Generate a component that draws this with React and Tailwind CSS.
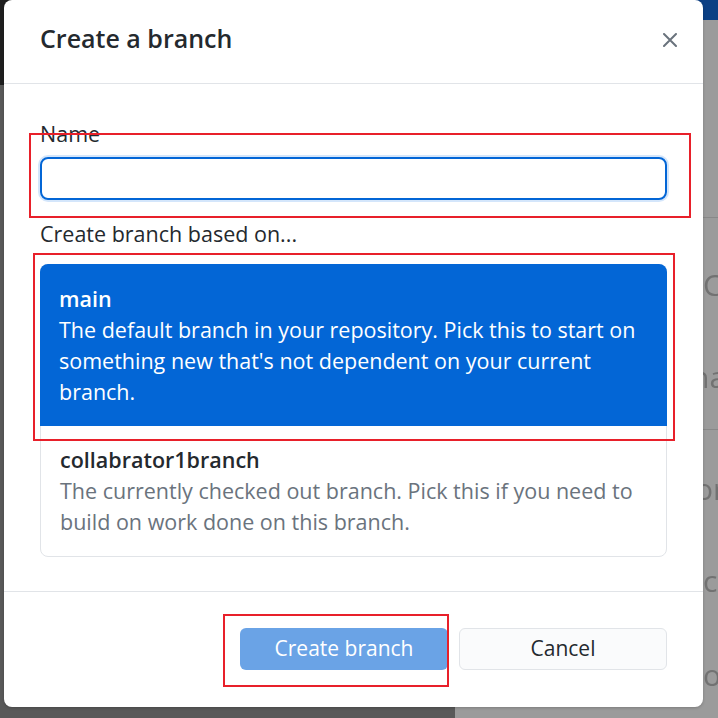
import React, { useState } from 'react';

const font = { fontFamily: '"Open Sans", "Noto Sans", Arial, sans-serif' };

const branches = [
  {
    name: 'main',
    description:
      "The default branch in your repository. Pick this to start on something new that's not dependent on your current branch.",
  },
  {
    name: 'collabrator1branch',
    description: 'The currently checked out branch. Pick this if you need to build on work done on this branch.',
  },
];

const App = () => {
  const [name, setName] = useState('');
  const [selected, setSelected] = useState('main');

  return (
    <div className="relative w-[718px] h-[718px] overflow-hidden bg-[#5a5a5a] flex" style={font}>
      {/* dimmed app behind the dialog */}
      <div className="w-[455px] flex flex-col">
        <div className="h-[85px] bg-[#1f1f1f]"></div>
        <div className="flex-1 bg-[#595959]"></div>
      </div>
      <div className="flex-1 flex flex-col bg-[#9b9b9b] text-[#727272] text-[30px] leading-none whitespace-nowrap overflow-hidden">
        <div className="h-[20px] bg-[#0b3f84]"></div>
        <div className="h-[198px] border-b border-[#888888]"></div>
        <div className="h-[212px] border-b border-[#888888] pl-[248px] pt-[52px] flex flex-col gap-[62px] blur-[0.6px]">
          <span>Cr</span>
          <span className="ml-[-12px]">na</span>
        </div>
        <div className="pl-[240px] pt-[44px] flex flex-col blur-[0.6px]">
          <span>or</span>
          <span className="ml-[8px] mt-[62px]">co</span>
          <span className="ml-[8px] mt-[64px]">op</span>
        </div>
      </div>

      {/* dialog */}
      <div className="absolute left-[4px] top-0 w-[699px] h-[707px] bg-white rounded-[8px] flex flex-col text-[#24292e] shadow-[0_1px_3px_rgba(0,0,0,0.2)]">
        <div className="h-[84px] pl-[36px] pr-[26px] flex items-center justify-between border-b border-[#e1e4e8]">
          <h1 className="text-[25px] font-semibold mt-[-5px]">Create a branch</h1>
          <button className="text-[#6a737d] mt-[-4px]">
            <svg width="14" height="14" viewBox="0 0 14 14" fill="none" stroke="currentColor" strokeWidth="2" strokeLinecap="round">
              <path d="M1 1l12 12M13 1L1 13" />
            </svg>
          </button>
        </div>

        <div className="flex-1 px-[36px] pt-[37px] flex flex-col">
          <label className="text-[21.5px] leading-[26px]">Name</label>
          <input
            className="mt-[10px] h-[43px] rounded-[8px] border-2 border-[#0366d6] shadow-[0_0_0_2px_#d4e6fb] outline-none px-3 text-[21px]"
            value={name}
            onChange={(e) => setName(e.target.value)}
          />
          <div className="mt-[21px] text-[21.5px] leading-[26px]">Create branch based on...</div>
          <div className="mt-[17px] border border-[#e1e4e8] rounded-[8px] flex flex-col">
            {branches.map((b) => {
              const active = selected === b.name;
              return (
                <div
                  key={b.name}
                  onClick={() => setSelected(b.name)}
                  className={`px-[19px] ${active ? 'bg-[#0366d6] text-white rounded-t-[8px] -mx-px -mt-px pt-[22px] pb-[19px]' : 'pt-[21px] pb-[19px]'}`}
                >
                  <div className="text-[21.5px] font-semibold leading-[26px]">{b.name}</div>
                  <div className={`mt-[2px] text-[21.5px] leading-[31px] ${active ? 'text-white' : 'text-[#6a737d]'}`}>{b.description}</div>
                </div>
              );
            })}
          </div>
        </div>

        <div className="h-[116px] border-t border-[#e1e4e8] flex justify-end items-start pt-[36px] pr-[36px] gap-[11px]">
          <button className="w-[208px] h-[42px] rounded-[6px] bg-[#6aa3e6] text-white text-[21px]">Create branch</button>
          <button className="w-[208px] h-[42px] rounded-[6px] bg-[#fafbfc] border border-[#e1e4e8] text-[21px]">Cancel</button>
        </div>
      </div>

      {/* annotation boxes */}
      <div className="absolute left-[29px] top-[133px] w-[662px] h-[85px] border-2 border-[#e8202a]"></div>
      <div className="absolute left-[33px] top-[253px] w-[642px] h-[188px] border-2 border-[#e8202a]"></div>
      <div className="absolute left-[223px] top-[614px] w-[226px] h-[73px] border-2 border-[#e8202a]"></div>
    </div>
  );
};

export default App;
